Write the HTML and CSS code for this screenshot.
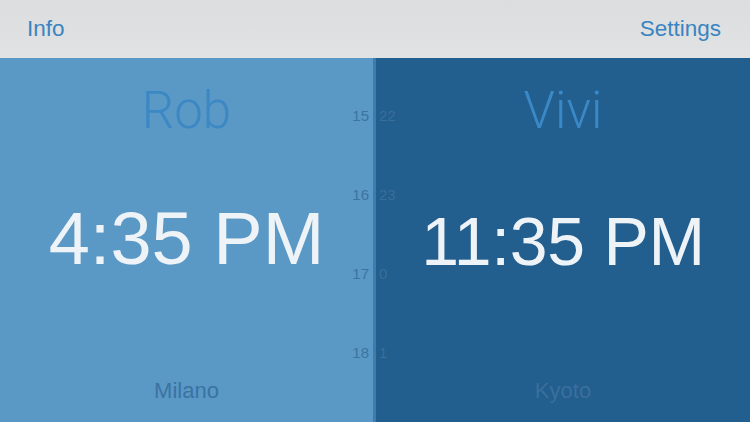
FILE: index.html
```html
<!DOCTYPE html>
<html>
<head>
<meta charset="utf-8">
<link rel="stylesheet" href="styles.css">
</head>
<body>
<header class="bar">
  <span class="bar-btn">Info</span>
  <span class="bar-btn">Settings</span>
</header>
<main class="zones">
  <section class="zone zone-left">
    <div class="name">Rob</div>
    <div class="time">4:35 PM</div>
    <div class="city">Milano</div>
    <div class="hours hours-left">
      <span>15</span><span>16</span><span>17</span><span>18</span>
    </div>
  </section>
  <div class="divider"></div>
  <section class="zone zone-right">
    <div class="name">Vivi</div>
    <div class="time time-small">11:35 PM</div>
    <div class="city">Kyoto</div>
    <div class="hours hours-right">
      <span>22</span><span>23</span><span>0</span><span>1</span>
    </div>
  </section>
</main>
</body>
</html>
```
FILE: styles.css
```css
html, body {
  margin: 0;
  padding: 0;
  width: 750px;
  height: 422px;
  overflow: hidden;
  font-family: "Liberation Sans", Arial, sans-serif;
}
.bar {
  height: 58px;
  display: flex;
  align-items: center;
  justify-content: space-between;
  padding: 0 29px 0 27px;
  background: linear-gradient(180deg, #dcdddf 0%, #e1e2e4 100%);
  box-sizing: border-box;
}
.bar-btn {
  color: #3a84c0;
  font-size: 22.5px;
  padding-bottom: 1px;
}
.zones {
  display: flex;
  height: 364px;
}
.zone {
  position: relative;
  display: flex;
  flex-direction: column;
  align-items: center;
}
.zone-left {
  width: 373px;
  background: #5a98c5;
}
.zone-right {
  flex: 1;
  background: #225e8e;
}
.divider {
  width: 3px;
  background: #3f7caa;
}
.name {
  font-family: Roboto, "Liberation Sans", sans-serif;
  font-weight: 300;
  font-size: 51px;
  line-height: 60px;
  margin-top: 23px;
}
.zone-left .name { color: #3b88c4; }
.zone-right .name { color: #3a88c6; }
.time {
  font-size: 74px;
  line-height: 90px;
  margin-top: 53px;
  color: #eef3f7;
  letter-spacing: 0;
}
.time-small {
  font-size: 68px;
  margin-top: 55px;
  letter-spacing: -0.3px;
}
.city {
  font-size: 22px;
  line-height: 30px;
  margin-top: auto;
  margin-bottom: 16px;
}
.zone-left .city { color: #3a73a2; }
.zone-right .city { color: #3a6f9c; }
.hours {
  position: absolute;
  top: 50px;
  display: flex;
  flex-direction: column;
  gap: 63px;
  font-size: 15px;
  line-height: 16px;
}
.hours-left {
  right: 4px;
  text-align: right;
  color: #3c74a2;
}
.hours-right {
  left: 3px;
  text-align: left;
  color: #3a6e9b;
}
```
